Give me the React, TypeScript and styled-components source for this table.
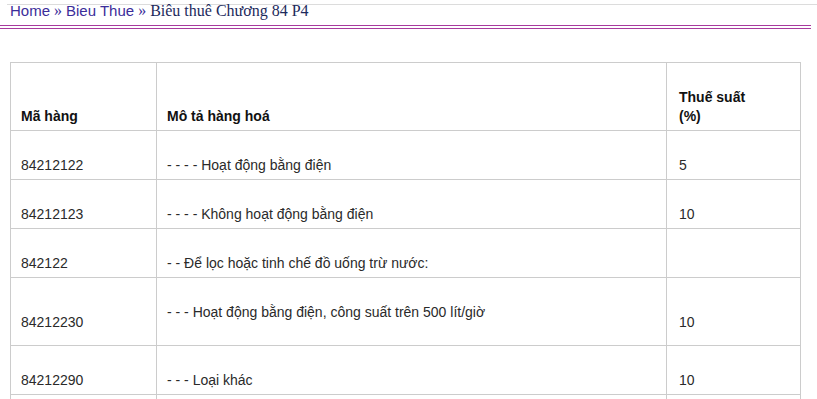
import React from "react";
import styled, { createGlobalStyle } from "styled-components";

interface TariffRow {
  code: string;
  description: string;
  rate: string;
  extraLine?: boolean;
}

const rows: TariffRow[] = [
  { code: "84212122", description: "- - - - Hoạt động bằng điện", rate: "5" },
  { code: "84212123", description: "- - - - Không hoạt động bằng điện", rate: "10" },
  { code: "842122", description: "- - Để lọc hoặc tinh chế đồ uống trừ nước:", rate: "" },
  {
    code: "84212230",
    description: "- - - Hoạt động bằng điện, công suất trên 500 lít/giờ",
    rate: "10",
    extraLine: true,
  },
  { code: "84212290", description: "- - - Loại khác", rate: "10" },
  // next row starts at the bottom edge of the view, its text is below the fold
  { code: "", description: "", rate: "" },
];

// Page with breadcrumb and tariff table for chapter 84
const App: React.FC = () => {
  return (
    <>
      <GlobalStyle />
      <Page>
        <TopRule>
          <Breadcrumb>
            <CrumbLink href="#">Home</CrumbLink>
            <Separator> » </Separator>
            <CrumbLink href="#">Bieu Thue</CrumbLink>
            <Separator> » </Separator>
            <CurrentCrumb>Biêu thuê Chương 84 P4</CurrentCrumb>
          </Breadcrumb>
        </TopRule>
        <DoubleRule />
        <TariffTable>
          <colgroup>
            <col style={{ width: 146 }} />
            <col style={{ width: 510 }} />
            <col style={{ width: 134 }} />
          </colgroup>
          <thead>
            <tr>
              <HeadCell>Mã hàng</HeadCell>
              <HeadCell>Mô tả hàng hoá</HeadCell>
              <HeadCell $inset={12}>
                Thuế suất
                <br />
                (%)
              </HeadCell>
            </tr>
          </thead>
          <tbody>
            {rows.map((row, i) => (
              <tr key={row.code || `row-${i}`}>
                <BodyCell>{row.code}</BodyCell>
                <BodyCell>
                  {row.description}
                  {row.extraLine && (
                    <>
                      <br />
                      &nbsp;
                    </>
                  )}
                </BodyCell>
                <BodyCell $inset={12}>{row.rate}</BodyCell>
              </tr>
            ))}
          </tbody>
        </TariffTable>
      </Page>
    </>
  );
};

const GlobalStyle = createGlobalStyle`
  html, body {
    margin: 0;
    padding: 0;
    background: #fff;
  }
  body {
    font-family: "Liberation Serif", "Times New Roman", serif;
  }
`;

const Page = styled.div`
  width: 817px;
  padding-top: 4px;
`;

const TopRule = styled.div`
  margin-left: 7px;
  border-top: 1px solid #dcdcdc;
`;

const Breadcrumb = styled.div`
  padding-left: 3px;
  height: 13px;
  line-height: 12px;
  white-space: nowrap;
`;

const CrumbLink = styled.a`
  font-family: "Liberation Sans", Arial, sans-serif;
  font-size: 15px;
  color: #3b2d9a;
  text-decoration: none;
`;

const Separator = styled.span`
  font-size: 16px;
  color: #3b2d9a;
`;

const CurrentCrumb = styled.span`
  font-size: 16px;
  color: #1c2a5c;
`;

const DoubleRule = styled.div`
  margin-top: 7px;
  width: 811px;
  height: 2px;
  border-top: 1px solid #a83a9e;
  border-bottom: 1px solid #a83a9e;
`;

const TariffTable = styled.table`
  margin: 33px 0 0 10px;
  width: 791px;
  table-layout: fixed;
  border-collapse: collapse;
  font-family: "Liberation Sans", Arial, sans-serif;
  font-size: 14px;
  line-height: 19px;
`;

const HeadCell = styled.th<{ $inset?: number }>`
  border: 1px solid #cccccc;
  padding: 25px 8px 4px ${(p) => p.$inset ?? 10}px;
  text-align: left;
  vertical-align: bottom;
  font-weight: bold;
  color: #111;
`;

const BodyCell = styled.td<{ $inset?: number }>`
  border: 1px solid #cccccc;
  padding: 25px 8px 4px ${(p) => p.$inset ?? 10}px;
  height: 19px;
  vertical-align: middle;
  color: #2a2a2a;
`;

export default App;
